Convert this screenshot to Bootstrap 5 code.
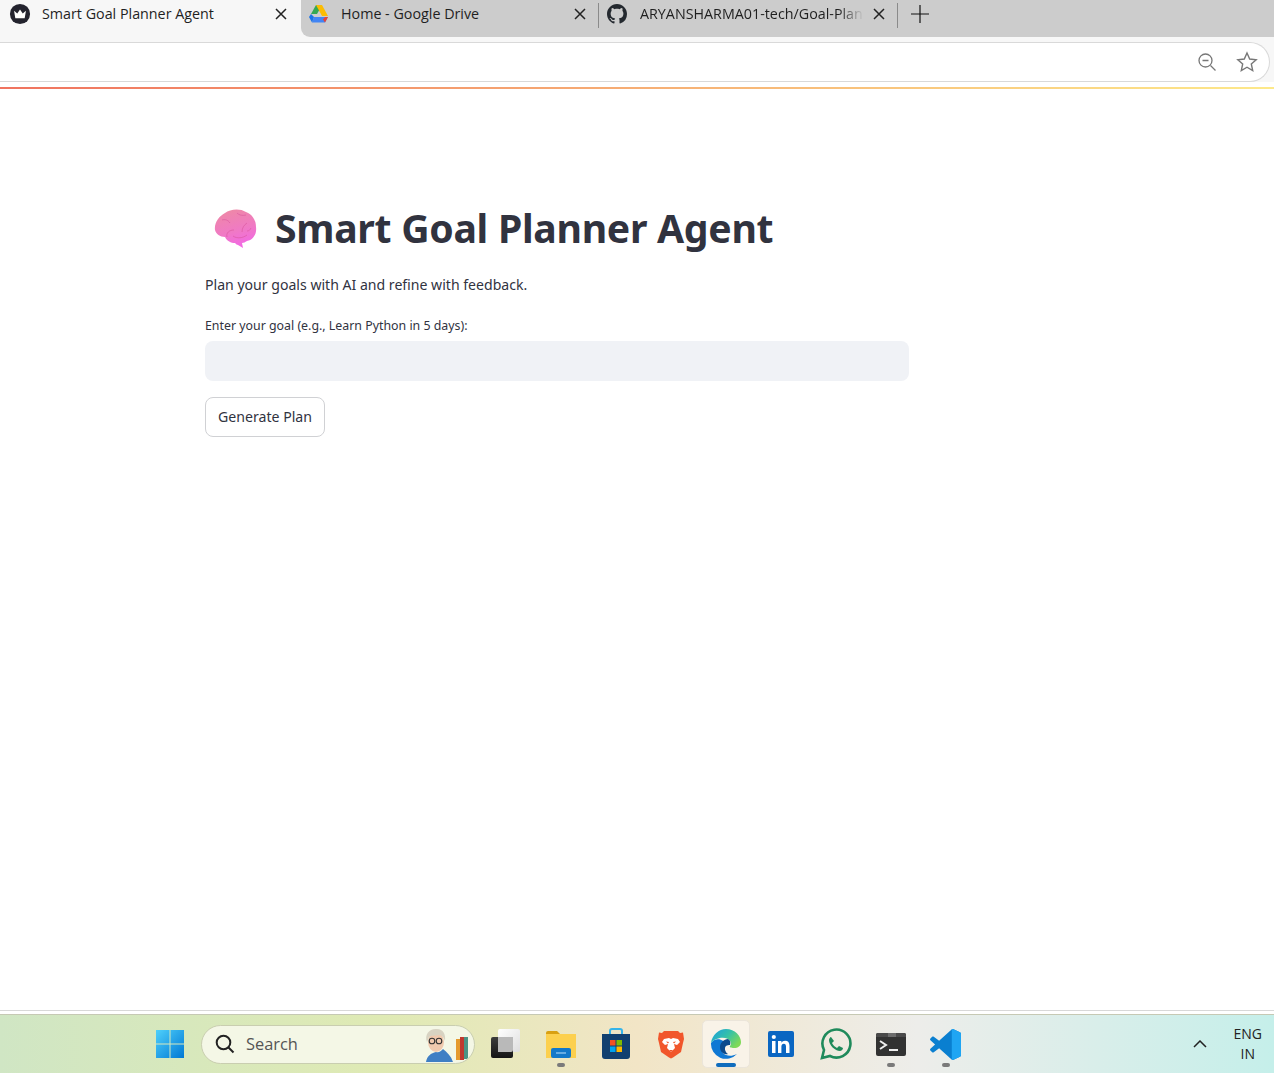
<!DOCTYPE html>
<html lang="en">
<head>
  <meta charset="UTF-8" />
  <meta name="viewport" content="width=device-width, initial-scale=1.0" />
  <title>Smart Goal Planner Agent</title>
  <link href="https://cdn.jsdelivr.net/npm/bootstrap@5.3.3/dist/css/bootstrap.min.css" rel="stylesheet">
  <style>
    html, body { height: 100%; }
    body { background: #fff; overflow: hidden; font-family: "Noto Sans", sans-serif; }
    .screen { height: 1073px; }

    /* browser tabs */
    .tabstrip { height: 37px; background: linear-gradient(90deg, #f7f7f7 310px, #cccccc 310px); }
    .tabitem { height: 37px; padding-bottom: 9px !important; font-size: 14.3px; color: #1f1f1f; white-space: nowrap; font-family: "Open Sans", sans-serif; }
    .tab-active { width: 301px; background: #f7f7f7; padding: 0 14px 0 9px; gap: 11px; }
    .tab-two { width: 297px; background: #cccccc; padding: 0 12px 0 8px; gap: 12px; border-radius: 0 0 0 9px; }
    .tab-three { width: 298px; padding: 0 12px 0 8px; gap: 13px; }
    .tab-new { margin-left: 13px; }
    .tabsep { width: 1px; height: 25px; margin-top: 3px; background: #8a8a8a; }
    .tabtitle { flex: 1; overflow: hidden; }
    .tabtitle-fade { margin-right: -6px; -webkit-mask-image: linear-gradient(90deg, #000 88%, transparent 99%); mask-image: linear-gradient(90deg, #000 88%, transparent 99%); }

    /* address bar */
    .toolbar { height: 45px; background: #f7f7f7; padding: 5px 4px 0 0; }
    .addressbar { height: 40px; background: #fff; border: 1px solid #d9d9d9; border-left: 0; border-radius: 0 20px 20px 0; padding-right: 11px; gap: 19px; }
    .pagestripe { height: 2px; margin-top: 5px; background: linear-gradient(90deg, #f0735f, #fde98a); }

    /* page */
    .pagebody { padding: 115px 0 0 205px; color: #31333f; font-family: "Noto Sans", sans-serif; }
    .goalcol { width: 704px; }
    .goaltitle { font-size: 39.2px; font-weight: 700; line-height: 44px; margin: 0 0 23px; gap: 16px; padding-left: 8px; letter-spacing: -.3px; }
    .brainicon { margin-top: 4px; }
    .goalintro { font-size: 14.08px; line-height: 20px; margin-bottom: 22px; }
    .goallabel { font-size: 12.36px; line-height: 18px; margin-bottom: 6px; }
    .goalinput { height: 40px; background: #f0f2f6; border: 0; border-radius: 8px; }
    .goalbtn { height: 40px; width: 120px; margin-top: 16px; padding: 0; font-size: 14.15px; color: #31333f; background: #fff; border: 1px solid #d0d1d4; border-radius: 8px; }

    /* windows taskbar */
    .taskbar { height: 63px; margin-top: auto; border-top: 1px solid #d8d8d8; box-shadow: inset 0 3px 0 #fff, inset 0 4px 0 #c6c9b4; padding: 4px 0 0 0; background: linear-gradient(90deg, #d0e6c4 0%, #dfeab4 30%, #f2e5c6 50%, #ededea 72%, #c5efea 100%); }
    .taskicons { padding-left: 142px; }
    .taskcell { width: 55px; height: 48px; position: relative; }
    .winbtn { width: 55px; }
    .searchbox { width: 274px; height: 39px; margin: 0 3px 0 4px; padding: 0 0 0 13px; gap: 11px; background: #f4f7e6; border: 1px solid #c9ceb0; border-radius: 20px; font-size: 16.4px; color: #555; font-family: "Open Sans", sans-serif; overflow: hidden; }
    .cell-active { width: 48px; margin: 0 3.5px; background: #f9f3e8; border: 1px solid #ebe5da; border-radius: 5px; }
    .rundot { position: absolute; left: 24px; bottom: 1px; width: 8px; height: 4px; background: #7a7a7a; border-radius: 2px; }
    .rundot-active { left: 13px; width: 20px; background: #0f6cbd; bottom: 0; }
    .tray { margin-left: auto; padding-right: 12px; gap: 27px; }
    .langbox { font-size: 14px; line-height: 20px; color: #222; text-align: center; font-family: "Open Sans", sans-serif; }
  </style>
</head>
<body>
  <div class="screen d-flex flex-column">

    <!-- tabs -->
    <div class="tabstrip d-flex align-items-start">
      <div class="tabitem tab-active d-flex align-items-center">
        <svg width="22" height="22" viewBox="0 0 24 24"><circle cx="12" cy="12" r="11" fill="#23232e"/><path d="M5.500 8.500l3.500 3 3-4.500 3 4.500 3.500-3-1.400 8H6.900z" fill="#fff"/></svg>
        <span class="tabtitle">Smart Goal Planner Agent</span>
        <svg width="12" height="12" viewBox="0 0 12 12"><path d="M1 1l10 10M11 1L1 11" stroke="#222" stroke-width="1.500"/></svg>
      </div>
      <div class="tabitem tab-two d-flex align-items-center">
        <svg width="20" height="18" viewBox="0 0 20 18"><path d="M7 0h6l-5 9H2z" fill="#34a853"/><path d="M7 0h6l6 11h-6z" fill="#fbbc04"/><path d="M5 12h14l-3 5.500H3z" fill="#4285f4"/><path d="M2 9l3 3-2 5.500-3-5.500z" fill="#1a73e8"/><path d="M16 12h3l-3 5.500-2-3z" fill="#ea4335"/></svg>
        <span class="tabtitle">Home - Google Drive</span>
        <svg width="12" height="12" viewBox="0 0 12 12"><path d="M1 1l10 10M11 1L1 11" stroke="#222" stroke-width="1.500"/></svg>
      </div>
      <div class="tabsep"></div>
      <div class="tabitem tab-three d-flex align-items-center">
        <svg width="20" height="20" viewBox="0 0 16 16"><path fill="#24292f" d="M8 0C3.580 0 0 3.580 0 8c0 3.540 2.290 6.530 5.470 7.590.4.070.55-.17.55-.38 0-.19-.01-.82-.01-1.490-2.010.37-2.530-.49-2.690-.94-.09-.23-.48-.94-.82-1.130-.28-.15-.68-.52-.01-.53.63-.01 1.080.58 1.230.82.720 1.210 1.870.87 2.330.66.070-.52.28-.87.510-1.070-1.780-.2-3.640-.89-3.640-3.950 0-.87.310-1.590.820-2.150-.08-.2-.36-1.020.08-2.120 0 0 .67-.21 2.200.82.640-.18 1.320-.27 2-.27s1.360.09 2 .27c1.530-1.040 2.200-.82 2.200-.82.440 1.100.160 1.920.080 2.120.510.560.820 1.270.820 2.150 0 3.070-1.870 3.750-3.650 3.950.290.250.540.730.540 1.480 0 1.070-.01 1.930-.01 2.200 0 .210.150.460.550.380A8.010 8.010 0 0016 8c0-4.420-3.580-8-8-8z"/></svg>
        <span class="tabtitle tabtitle-fade">ARYANSHARMA01-tech/Goal-Plan</span>
        <svg width="12" height="12" viewBox="0 0 12 12"><path d="M1 1l10 10M11 1L1 11" stroke="#222" stroke-width="1.500"/></svg>
      </div>
      <div class="tabsep"></div>
      <div class="tabitem tab-new d-flex align-items-center">
        <svg width="18" height="18" viewBox="0 0 18 18"><path d="M9 0v18M0 9h18" stroke="#111" stroke-width="1.200"/></svg>
      </div>
    </div>

    <!-- address bar -->
    <div class="toolbar">
      <div class="addressbar d-flex align-items-center justify-content-end">
        <svg width="20" height="20" viewBox="0 0 20 20" fill="none" stroke="#777" stroke-width="1.300"><circle cx="8.500" cy="8.500" r="6.500"/><path d="M5.500 8.500h6M13.500 13.500l5 5"/></svg>
        <svg width="22" height="22" viewBox="0 0 22 22" fill="none" stroke="#777" stroke-width="1.400"><path d="M11 2l2.700 6 6.500.7-4.900 4.300 1.400 6.500L11 16.200 5.300 19.500l1.400-6.500L1.800 8.700 8.300 8z"/></svg>
      </div>
    </div>
    <div class="pagestripe"></div>

    <!-- page -->
    <main class="pagebody">
      <div class="goalcol">
        <h1 class="goaltitle d-flex align-items-center">
          <svg class="brainicon" width="46" height="44" viewBox="0 0 46 44">
            <defs>
              <linearGradient id="brainfill" x1=".3" y1="0" x2=".6" y2="1">
                <stop offset="0" stop-color="#ee88a6"/><stop offset=".55" stop-color="#f07ac4"/><stop offset="1" stop-color="#f268e6"/>
              </linearGradient>
            </defs>
            <path fill="url(#brainfill)" d="M2 22C1 15 6 8 12 5 17 1 27 0 33 4c6 2 10 8 10 15 1 7-3 13-9 14-2 1-3 2-5 2l1 5-5-3c-1 0-2-1-3-2-4 0-8-2-10-6-5 0-9-3-10-7z"/>
            <path fill="none" stroke="#d8559c" stroke-width=".8" opacity=".75" d="M9 12c3-1 6 0 8 3M24 5c2 2 5 3 9 2M34 15c-3 2-5 5-5 9M14 29c-1-4 2-7 7-7M20 28c4 3 10 2 14-1M38 20c-1 2-2 3-4 3"/>
          </svg>
          <span>Smart Goal Planner Agent</span>
        </h1>
        <p class="goalintro">Plan your goals with AI and refine with feedback.</p>
        <label class="goallabel form-label d-block" for="goal">Enter your goal (e.g., Learn Python in 5 days):</label>
        <input class="form-control goalinput" id="goal" type="text">
        <button class="btn goalbtn d-block" type="button">Generate Plan</button>
      </div>
    </main>

    <!-- taskbar -->
    <footer class="taskbar d-flex align-items-center">
      <div class="taskicons d-flex align-items-center">
        <div class="taskcell winbtn d-flex align-items-center justify-content-center">
          <svg width="30" height="30" viewBox="0 0 30 30"><defs><linearGradient id="wg" x1="0" y1="0" x2="1" y2="1"><stop offset="0" stop-color="#4fd0fb"/><stop offset="1" stop-color="#0078d4"/></linearGradient></defs><path fill="url(#wg)" d="M1 1h13.500v13.500H1zM15.500 1H29v13.500H15.500zM1 15.500h13.500V29H1zM15.500 15.500H29V29H15.500z"/></svg>
        </div>
        <div class="searchbox d-flex align-items-center">
          <svg class="flex-shrink-0" width="20" height="20" viewBox="0 0 20 20" fill="none" stroke="#222" stroke-width="2"><circle cx="8.500" cy="8.500" r="6.800"/><path d="M13.500 13.500l5 5"/></svg>
          <span class="flex-grow-1">Search</span>
          <svg class="flex-shrink-0" width="56" height="36" viewBox="0 0 56 36">
            <path d="M8 36c1-6 5-9 10-10 3 1 5-1 7-3 4 3 8 7 10 13z" fill="#3f7fc4"/>
            <ellipse cx="18" cy="16" rx="8" ry="10" fill="#f0c9ae"/>
            <path d="M9 16C6 8 12 2 19 3c6 0 9 5 8 12-1-3-3-6-6-6-4 1-8 0-10 2z" fill="#d8d3c2"/>
            <circle cx="14" cy="15" r="2.800" fill="none" stroke="#333" stroke-width="1.100"/><circle cx="21" cy="15" r="2.800" fill="none" stroke="#333" stroke-width="1.100"/>
            <rect x="38" y="13" width="4" height="21" fill="#e59a2e"/><rect x="42" y="11" width="4" height="23" fill="#c0392f"/><rect x="46" y="11" width="4" height="22" fill="#4b9485"/>
          </svg>
        </div>
        <div class="taskcell d-flex align-items-center justify-content-center">
          <svg width="32" height="32" viewBox="0 0 32 32"><defs><linearGradient id="tvback" x1="0" y1="0" x2="1" y2="1"><stop offset="0" stop-color="#fff"/><stop offset="1" stop-color="#dedede"/></linearGradient><linearGradient id="tvfront" x1="0" y1="0" x2="0" y2="1"><stop offset="0" stop-color="#3c3c3c"/><stop offset="1" stop-color="#141414"/></linearGradient></defs><rect x="8" y="1" width="22" height="23" rx="2" fill="url(#tvback)"/><rect x="1" y="9" width="22" height="21" rx="2" fill="url(#tvfront)"/><path d="M8 9h15v13a2 2 0 01-2 2H8z" fill="#b9b9b9"/></svg>
        </div>
        <div class="taskcell d-flex align-items-center justify-content-center">
          <svg width="30" height="28" viewBox="0 0 30 28"><path d="M0 3a2 2 0 012-2h9l3 3H0z" fill="#d9a012"/><path d="M0 4h30v24H0z" fill="#fcd04e"/><rect x="5" y="18" width="20" height="10" rx="2" fill="#1278c9"/><path d="M10 23h10" stroke="#9ed0f5" stroke-width="1.200"/></svg>
          <span class="rundot"></span>
        </div>
        <div class="taskcell d-flex align-items-center justify-content-center">
          <svg width="30" height="32" viewBox="0 0 30 32"><path d="M9 6V3a2 2 0 012-2h8a2 2 0 012 2v3" fill="none" stroke="#35b4ea" stroke-width="2"/><path d="M1 6h28v22a3 3 0 01-3 3H4a3 3 0 01-3-3z" fill="#12406f"/><rect x="9" y="12" width="5.500" height="5.500" fill="#f25022"/><rect x="15.500" y="12" width="5.500" height="5.500" fill="#7fba00"/><rect x="9" y="18.500" width="5.500" height="5.500" fill="#00a4ef"/><rect x="15.500" y="18.500" width="5.500" height="5.500" fill="#ffb900"/></svg>
        </div>
        <div class="taskcell d-flex align-items-center justify-content-center">
          <svg width="26" height="29" viewBox="0 0 26 29"><path d="M6 1h14l2 2 3-.5L26 9l-1 4-2 9-8 5.500-2 1-2-1-8-5.500-2-9-1-4 1-6.500 3 .5z" fill="#f1562b"/><path d="M6 9l5-1 2 1 2-1 5 1 2 3-3 3-3-1 1 4-3 3-1 1-1-1-3-3 1-4-3 1-3-3z" fill="#fff"/><path d="M8 11.500l3 .5-1 1.500zM18 11.500l-3 .5 1 1.500z" fill="#f1562b"/><path d="M11 20h4l-2 2z" fill="#f1562b"/></svg>
        </div>
        <div class="taskcell cell-active d-flex align-items-center justify-content-center">
          <svg width="32" height="32" viewBox="0 0 32 32"><defs><linearGradient id="eg" x1="0" y1="0" x2="1" y2=".6"><stop offset="0" stop-color="#1b9de2"/><stop offset=".55" stop-color="#35c1a8"/><stop offset="1" stop-color="#7ed957"/></linearGradient></defs><path d="M1 15a15 15 0 0026 11c-6 3-11 2-14-1-3-4-2-9 2-11 0 0-8-7-14 1z" fill="#0f78d4"/><path d="M1 15C2 7 9 1 16 1c9 0 15 7 15 13 0 4-3 6-7 6-3 0-5-1-4-2 2-2 1-5-2-7-6-3-14 0-17 4z" fill="url(#eg)"/><path d="M10 19c0-4 4-8 8-8 2 1 3 3 2 6-1 0-3 0-4 1-2 2-1 6 2 8-4 1-8-2-8-7z" fill="#0b4a8c"/></svg>
          <span class="rundot rundot-active"></span>
        </div>
        <div class="taskcell d-flex align-items-center justify-content-center">
          <svg width="26" height="26" viewBox="0 0 26 26"><rect width="26" height="26" rx="2" fill="#0a66c2"/><rect x="4" y="10" width="3.500" height="12" fill="#fff"/><circle cx="5.800" cy="6" r="2.100" fill="#fff"/><path d="M10 10h3.400v1.700c.7-1.200 2-2 3.700-2 3 0 4.400 1.900 4.400 5V22H18v-6.500c0-1.700-.6-2.800-2.100-2.800-1.600 0-2.500 1.100-2.500 2.900V22H10z" fill="#fff"/></svg>
        </div>
        <div class="taskcell d-flex align-items-center justify-content-center">
          <svg width="32" height="32" viewBox="0 0 32 32"><path d="M2 30l2-8A14 14 0 1110 28z" fill="none" stroke="#1f8a5b" stroke-width="2.600"/><path d="M11 9c-1 0-2 2-2 3 0 5 6 11 11 11 1 0 3-1 3-3l-4-2-2 2c-2-1-4-3-5-5l2-2z" fill="#1f8a5b"/></svg>
        </div>
        <div class="taskcell d-flex align-items-center justify-content-center">
          <svg width="30" height="23" viewBox="0 0 30 23"><rect width="30" height="23" rx="2" fill="#323232"/><path d="M0 2a2 2 0 012-2h26a2 2 0 012 2v2H0z" fill="#4a4a4a"/><rect x="12" width="8" height="4" fill="#6c6c6c"/><path d="M4 8l6 4-6 4" fill="none" stroke="#eee" stroke-width="2"/><path d="M13 17h9" stroke="#eee" stroke-width="2"/></svg>
          <span class="rundot"></span>
        </div>
        <div class="taskcell d-flex align-items-center justify-content-center">
          <svg width="31" height="31" viewBox="0 0 100 100"><defs><clipPath id="vsright"><rect x="70" width="30" height="100"/></clipPath></defs><path fill="#0a7fd0" d="M70.900 99.300c1.600.6 3.400.6 5-.2l20.600-9.900c2.200-1 3.500-3.200 3.500-5.600V16.400c0-2.400-1.400-4.600-3.500-5.600L75.900.9c-2.100-1-4.500-.8-6.300.6-.3.200-.5.400-.8.700L29.400 38.100 12.200 25.100c-1.600-1.200-3.800-1.100-5.300.2L1.400 30.400c-1.800 1.600-1.800 4.500 0 6.100L16.300 50 1.400 63.500c-1.800 1.700-1.800 4.500 0 6.100l5.500 5c1.500 1.300 3.700 1.400 5.300.2l17.200-13 39.400 35.900c.6.600 1.400 1.100 2.100 1.500zM75 27.300 45.100 50 75 72.700V27.300z"/><path clip-path="url(#vsright)" fill-rule="evenodd" fill="#1fa5f3" d="M70.900 99.300c1.600.6 3.400.6 5-.2l20.600-9.900c2.200-1 3.500-3.200 3.500-5.600V16.400c0-2.400-1.400-4.600-3.500-5.600L75.900.9c-2.100-1-4.500-.8-6.300.6l-.8.700v95.600zM75 27.300V72.700z"/></svg>
          <span class="rundot"></span>
        </div>
      </div>
      <div class="tray d-flex align-items-center">
        <svg width="14" height="8" viewBox="0 0 14 8"><path d="M1 7l6-6 6 6" fill="none" stroke="#222" stroke-width="1.500"/></svg>
        <div class="langbox">ENG<br>IN</div>
      </div>
    </footer>
  </div>
  <script src="https://cdn.jsdelivr.net/npm/bootstrap@5.3.3/dist/js/bootstrap.bundle.min.js"></script>
</body>
</html>
